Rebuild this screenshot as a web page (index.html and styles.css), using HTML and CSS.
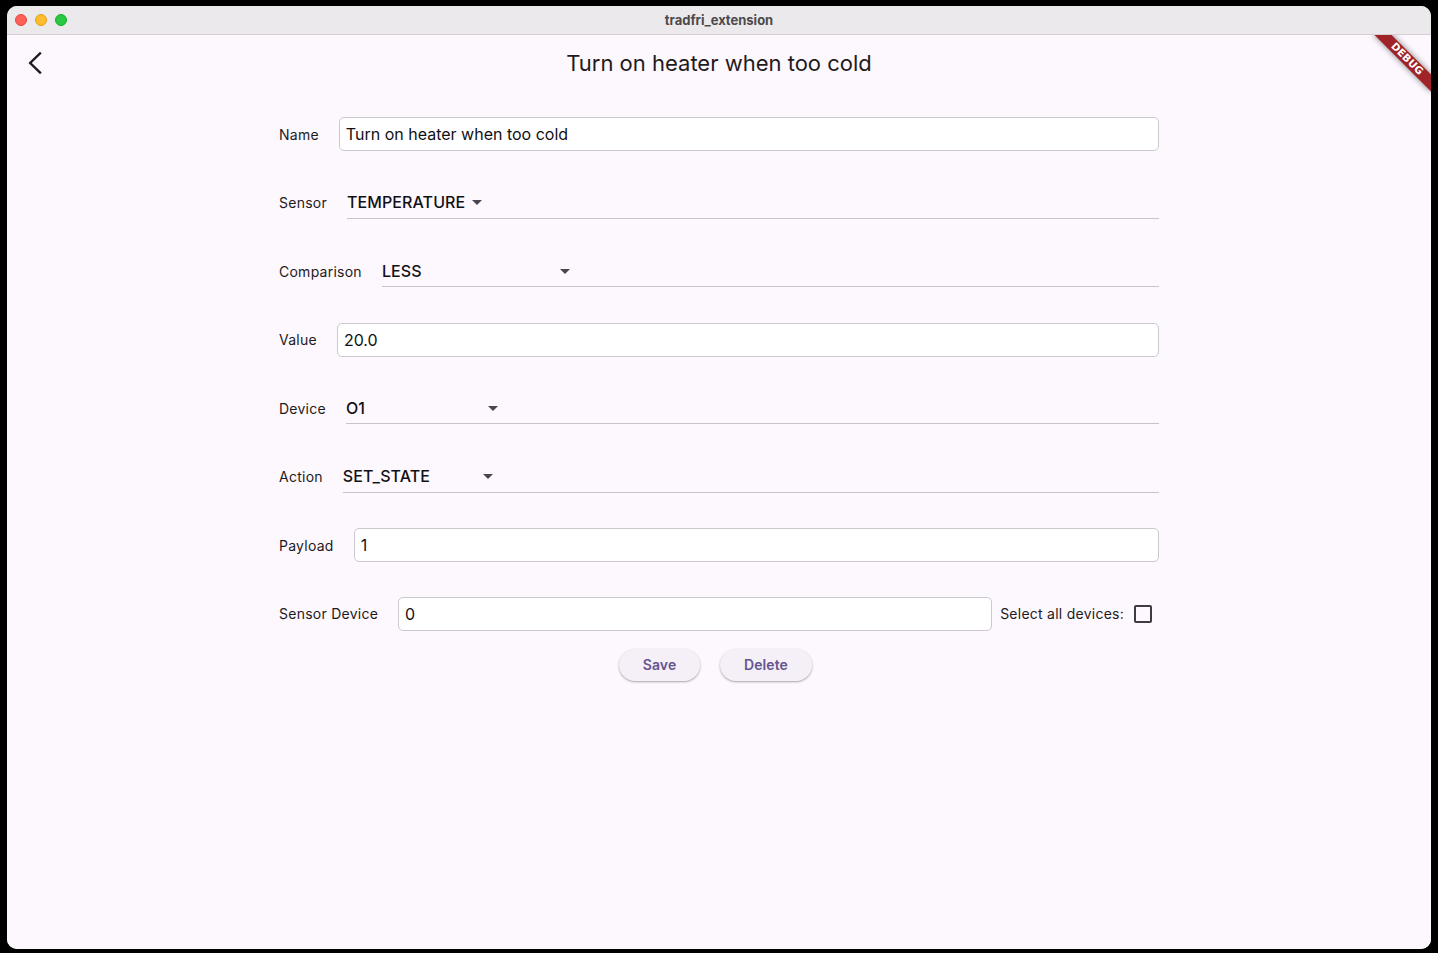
FILE: index.html
```html
<!DOCTYPE html>
<html lang="en">
<head>
<meta charset="utf-8">
<title>tradfri_extension</title>
<link rel="stylesheet" href="styles.css">
</head>
<body>
<div class="window">
  <div class="titlebar">
    <div class="lights">
      <span class="light red"></span>
      <span class="light yellow"></span>
      <span class="light green"></span>
    </div>
    <div class="wintitle">tradfri_extension</div>
  </div>
  <div class="content">
    <div class="banner"><span>DEBUG</span></div>
    <header class="appbar">
      <button class="back" aria-label="Back">
        <svg width="24" height="24" viewBox="0 0 24 24"><path d="M17 2.5 L7.2 12 L17 21.5" fill="none" stroke="#1d1b20" stroke-width="2.4" stroke-linecap="square" stroke-linejoin="miter"/></svg>
      </button>
      <h1 class="title">Turn on heater when too cold</h1>
    </header>
    <main class="form">
      <div class="rows">
        <div class="row">
          <label class="label">Name</label>
          <div class="field"><span class="value">Turn on heater when too cold</span></div>
        </div>
        <div class="row">
          <label class="label">Sensor</label>
          <div class="dropdown">
            <span class="dd-value w-sensor">TEMPERATURE</span>
            <span class="dd-arrow"></span>
          </div>
        </div>
        <div class="row">
          <label class="label">Comparison</label>
          <div class="dropdown">
            <span class="dd-value w-comparison">LESS</span>
            <span class="dd-arrow"></span>
          </div>
        </div>
        <div class="row">
          <label class="label">Value</label>
          <div class="field"><span class="value">20.0</span></div>
        </div>
        <div class="row">
          <label class="label">Device</label>
          <div class="dropdown">
            <span class="dd-value w-device">O1</span>
            <span class="dd-arrow"></span>
          </div>
        </div>
        <div class="row">
          <label class="label">Action</label>
          <div class="dropdown">
            <span class="dd-value w-action">SET_STATE</span>
            <span class="dd-arrow"></span>
          </div>
        </div>
        <div class="row">
          <label class="label">Payload</label>
          <div class="field"><span class="value">1</span></div>
        </div>
        <div class="row">
          <label class="label">Sensor Device</label>
          <div class="field"><span class="value">0</span></div>
          <span class="select-all">Select all devices:</span>
          <span class="check-wrap"><span class="checkbox"></span></span>
        </div>
      </div>
      <div class="actions">
        <button class="btn btn-save">Save</button>
        <button class="btn btn-delete">Delete</button>
      </div>
    </main>
  </div>
</div>
</body>
</html>
```
FILE: styles.css
```css
* { box-sizing: border-box; }

html, body {
  margin: 0;
  padding: 0;
  background: #000;
}

body {
  padding: 6px 7px 4px 7px;
  font-family: Inter, "Noto Sans", "Liberation Sans", sans-serif;
  color: #1d1b20;
}

.window {
  width: 1424px;
  height: 943px;
  border-radius: 10px;
  overflow: hidden;
  background: #fdf7fe;
  display: flex;
  flex-direction: column;
}

.titlebar {
  height: 29px;
  flex: none;
  background: #ebe9eb;
  border-bottom: 1px solid #d3cfd3;
  display: flex;
  align-items: center;
  position: relative;
}

.lights {
  display: flex;
  gap: 8px;
  padding-left: 8px;
  padding-top: 0;
}

.light {
  width: 12px;
  height: 12px;
  border-radius: 50%;
  display: block;
}
.light.red { background: #fe5f57; border: 0.5px solid #e2463f; }
.light.yellow { background: #febc2e; border: 0.5px solid #e1a116; }
.light.green { background: #28c840; border: 0.5px solid #14ae2a; }

.wintitle {
  position: absolute;
  left: 0;
  right: 0;
  top: 0;
  bottom: 0;
  display: flex;
  align-items: center;
  justify-content: center;
  font-size: 13px;
  font-weight: 700;
  color: #4c4a4c;
  pointer-events: none;
}

.content {
  flex: 1;
  position: relative;
  overflow: hidden;
  background: #fdf7fe;
}

.banner {
  position: absolute;
  top: 18px;
  right: -16px;
  width: 80px;
  height: 12px;
  transform: rotate(45deg);
  background: #a02427;
  box-shadow: 0 0 6px rgba(0, 0, 0, 0.5);
  display: flex;
  align-items: center;
  justify-content: center;
  z-index: 5;
}
.banner span {
  color: #fff;
  font-size: 10.2px;
  font-weight: 900;
  line-height: 1;
  font-family: "DejaVu Sans", "Liberation Sans", sans-serif;
  letter-spacing: 0.2px;
}

.appbar {
  height: 56px;
  display: flex;
  align-items: center;
  position: relative;
}

.back {
  width: 56px;
  height: 56px;
  border: 0;
  background: transparent;
  padding: 0;
  display: flex;
  align-items: center;
  justify-content: center;
  position: relative;
  z-index: 1;
}

.title {
  position: absolute;
  left: 0;
  right: 0;
  margin: 0;
  text-align: center;
  font-size: 22px;
  font-weight: 400;
  color: #1d1b20;
  line-height: 26px;
}

.form {
  width: 880px;
  margin: 26px auto 0 auto;
}

.rows {
  display: flex;
  flex-direction: column;
  gap: 34.5px;
}

.row {
  height: 34px;
  display: flex;
  align-items: center;
}

.label {
  font-size: 14px;
  letter-spacing: 0.25px;
  color: #1d1b20;
  margin-right: 20px;
  white-space: nowrap;
}

.field {
  flex: 1;
  height: 34px;
  background: #fff;
  border: 1px solid #cdc7cf;
  border-radius: 5px;
  display: flex;
  align-items: center;
  padding: 0 6px;
}

.value {
  font-size: 16px;
  letter-spacing: 0;
  color: #111014;
}

.dropdown {
  flex: 1;
  align-self: flex-start;
  margin-top: 1px;
  height: 32px;
  border-bottom: 1px solid #c9c3cb;
  display: flex;
  align-items: center;
}

.dd-value {
  font-size: 16px;
  font-weight: 500;
  letter-spacing: 0.1px;
  color: #111014;
  white-space: nowrap;
}
.w-sensor { width: 118px; }
.w-comparison { width: 171px; }
.w-device { width: 135px; }
.w-action { width: 133px; }

.dd-arrow {
  width: 24px;
  height: 24px;
  position: relative;
  display: block;
}
.dd-arrow::after {
  content: "";
  position: absolute;
  left: 7px;
  top: 10px;
  border-left: 5px solid transparent;
  border-right: 5px solid transparent;
  border-top: 5px solid #4a4650;
}

.select-all {
  margin-left: 8px;
  font-size: 14px;
  letter-spacing: 0.25px;
  color: #1d1b20;
  white-space: nowrap;
}

.check-wrap {
  width: 35px;
  height: 32px;
  display: flex;
  align-items: center;
  justify-content: flex-end;
  padding-right: 7px;
}

.checkbox {
  width: 18px;
  height: 18px;
  border: 2px solid #3f3b42;
  border-radius: 2px;
  display: block;
  flex: none;
}

.actions {
  display: flex;
  justify-content: center;
  gap: 20px;
  margin-top: 18px;
  padding-right: 7px;
}

.btn {
  height: 32px;
  border: 0;
  border-radius: 16px;
  background: #f5eff7;
  color: #65558f;
  font-family: Inter, "Noto Sans", "Liberation Sans", sans-serif;
  font-size: 14px;
  font-weight: 600;
  letter-spacing: 0.1px;
  box-shadow: 0 1px 2px rgba(0, 0, 0, 0.25), 0 1px 3px rgba(0, 0, 0, 0.1);
}
.btn-save { width: 81px; }
.btn-delete { width: 92px; }
```
